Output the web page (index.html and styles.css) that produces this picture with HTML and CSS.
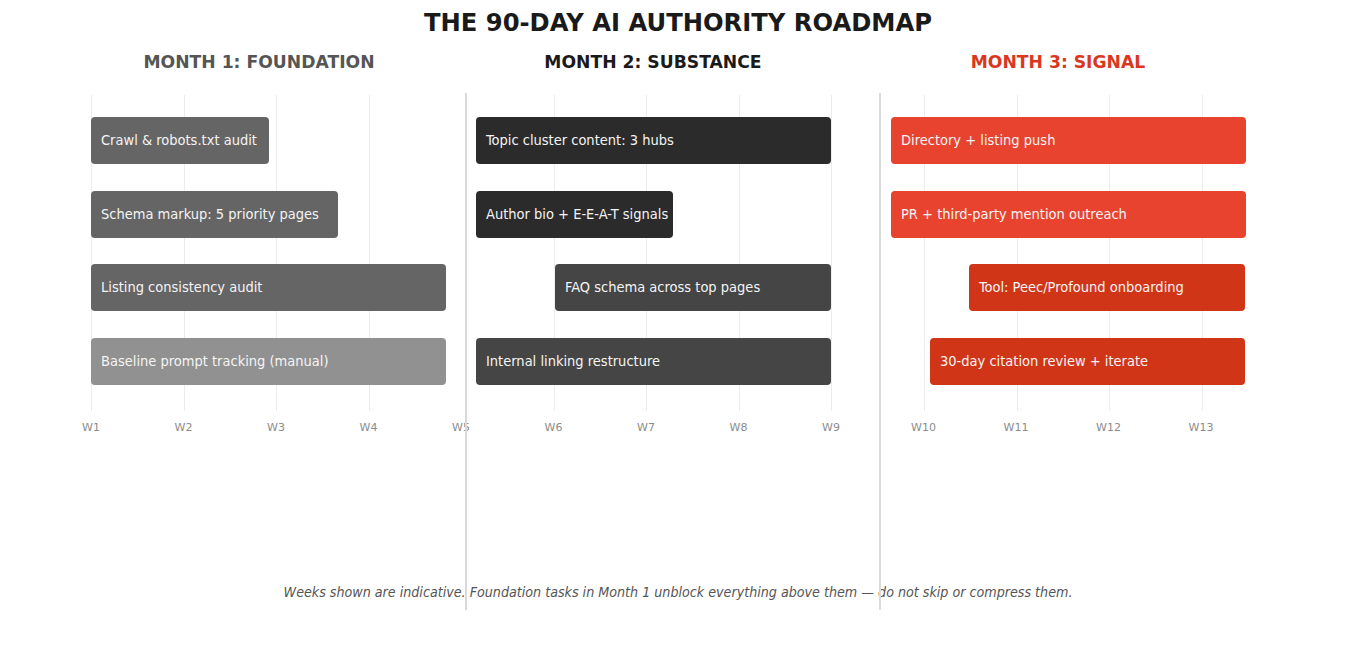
FILE: index.html
```html
<!DOCTYPE html>
<html lang="en">
<head>
<meta charset="utf-8">
<title>The 90-Day AI Authority Roadmap</title>
<link rel="stylesheet" href="styles.css">
</head>
<body>
<div class="page">
  <h1 class="title">THE 90-DAY AI AUTHORITY ROADMAP</h1>
  <div class="months">
    <div class="month m1">MONTH 1: FOUNDATION</div>
    <div class="month m2">MONTH 2: SUBSTANCE</div>
    <div class="month m3">MONTH 3: SIGNAL</div>
  </div>
  <div class="chart">
    <div class="gridline" style="left:91px"></div>
    <div class="gridline" style="left:184px"></div>
    <div class="gridline" style="left:276px"></div>
    <div class="gridline" style="left:369px"></div>
    <div class="gridline" style="left:554px"></div>
    <div class="gridline" style="left:646px"></div>
    <div class="gridline" style="left:739px"></div>
    <div class="gridline" style="left:831px"></div>
    <div class="gridline" style="left:924px"></div>
    <div class="gridline" style="left:1017px"></div>
    <div class="gridline" style="left:1109px"></div>
    <div class="gridline" style="left:1202px"></div>
    <div class="sep" style="left:465px"></div>
    <div class="sep" style="left:879px"></div>

    <div class="rows">
      <div class="row">
        <div class="bar g1" style="margin-left:0;width:178px">Crawl &amp; robots.txt audit</div>
        <div class="bar d1" style="margin-left:207px;width:355px">Topic cluster content: 3 hubs</div>
        <div class="bar r1" style="margin-left:60px;width:355px">Directory + listing push</div>
      </div>
      <div class="row">
        <div class="bar g1" style="margin-left:0;width:247px">Schema markup: 5 priority pages</div>
        <div class="bar d1" style="margin-left:138px;width:197px">Author bio + E-E-A-T signals</div>
        <div class="bar r1" style="margin-left:218px;width:355px">PR + third-party mention outreach</div>
      </div>
      <div class="row">
        <div class="bar g1" style="margin-left:0;width:355px">Listing consistency audit</div>
        <div class="bar d2" style="margin-left:109px;width:276px">FAQ schema across top pages</div>
        <div class="bar r2" style="margin-left:138px;width:276px">Tool: Peec/Profound onboarding</div>
      </div>
      <div class="row">
        <div class="bar g2" style="margin-left:0;width:355px">Baseline prompt tracking (manual)</div>
        <div class="bar d2" style="margin-left:30px;width:355px">Internal linking restructure</div>
        <div class="bar r2" style="margin-left:99px;width:315px">30-day citation review + iterate</div>
      </div>
    </div>

    <div class="ticks">
      <span>W1</span><span>W2</span><span>W3</span><span>W4</span><span>W5</span>
      <span>W6</span><span>W7</span><span>W8</span><span>W9</span><span>W10</span>
      <span>W11</span><span>W12</span><span>W13</span>
    </div>

    <p class="note">Weeks shown are indicative. Foundation tasks in Month 1 unblock everything above them — do not skip or compress them.</p>
  </div>
</div>
</body>
</html>
```

FILE: styles.css
```css
html, body {
  margin: 0;
  padding: 0;
  background: #ffffff;
}

body {
  font-family: "DejaVu Sans", "Liberation Sans", sans-serif;
  color: #1a1a1a;
  width: 1356px;
  height: 668px;
  overflow: hidden;
}

.page {
  display: flex;
  flex-direction: column;
}

.title {
  margin: 8px 0 0;
  font-size: 24.25px;
  line-height: 30px;
  font-weight: bold;
  text-align: center;
  color: #1a1a1a;
}

.months {
  display: grid;
  grid-template-columns: 398px 390px 420px;
  padding-left: 60px;
  margin-top: 13px;
  height: 22px;
}

.month {
  font-size: 17.2px;
  line-height: 22px;
  font-weight: bold;
  text-align: center;
}

.m1 { color: #555555; }
.m2 { color: #1a1a1a; }
.m3 { color: #d9381e; }

.chart {
  position: relative;
  margin-top: 20px;
  height: 517px;
}

.gridline {
  position: absolute;
  top: 2px;
  width: 1px;
  height: 316px;
  background: #ececec;
}

.sep {
  position: absolute;
  top: 0;
  width: 2px;
  height: 517px;
  background: #d9d9d9;
}

.rows {
  position: relative;
  display: flex;
  flex-direction: column;
  gap: 26.5px;
  padding: 24px 0 0 91px;
}

.row {
  display: flex;
  height: 47px;
}

.bar {
  flex: none;
  box-sizing: border-box;
  height: 47px;
  display: flex;
  align-items: center;
  padding-left: 10px;
  padding-bottom: 1px;
  border-radius: 4px;
  color: #f4f4f4;
  font-family: "DejaVu Sans Condensed", "DejaVu Sans", sans-serif;
  font-size: 14.5px;
  white-space: nowrap;
}

.g1 { background: #656565; }
.g2 { background: #919191; }
.d1 { background: #2b2b2b; }
.d2 { background: #454545; }
.r1 { background: #e8432e; }
.r2 { background: #d13517; }

.ticks {
  display: flex;
  padding-left: 44.75px;
  margin-top: 36px;
  height: 14px;
}

.ticks span {
  flex: none;
  width: 92.5px;
  text-align: center;
  font-size: 11px;
  line-height: 14px;
  color: #8c8c8c;
}

.note {
  margin: 148px 0 0;
  text-align: center;
  font-family: "DejaVu Sans Condensed", "DejaVu Sans", sans-serif;
  font-size: 14.15px;
  line-height: 18px;
  font-style: italic;
  color: #555555;
}
```
